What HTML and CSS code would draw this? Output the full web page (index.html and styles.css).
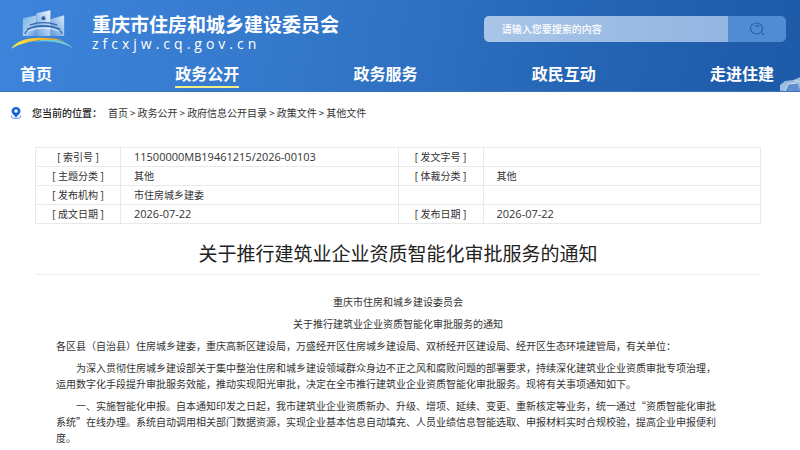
FILE: index.html
```html
<!DOCTYPE html>
<html lang="zh-CN">
<head>
<meta charset="utf-8">
<meta name="viewport" content="width=device-width, initial-scale=1">
<title>关于推行建筑业企业资质智能化审批服务的通知</title>
<link rel="stylesheet" href="styles.css">
</head>
<body>
<header class="site-header">
  <div class="masthead">
    <a class="brand" href="#">
      <svg class="brand-logo" viewBox="0 0 64 42" aria-hidden="true">
        <defs>
          <linearGradient id="tower" x1="0" y1="0" x2="1" y2="1">
            <stop offset="0" stop-color="#6fb6e0"/>
            <stop offset="0.55" stop-color="#a9cdf0"/>
            <stop offset="1" stop-color="#5c97de"/>
          </linearGradient>
          <linearGradient id="mid" x1="0" y1="1" x2="1" y2="0">
            <stop offset="0" stop-color="#6ba3e2"/>
            <stop offset="1" stop-color="#f0f7fd"/>
          </linearGradient>
          <linearGradient id="side" x1="0" y1="1" x2="1" y2="0">
            <stop offset="0" stop-color="#5f9ae0"/>
            <stop offset="1" stop-color="#d5e8f8"/>
          </linearGradient>
          <linearGradient id="gold" x1="0" y1="0" x2="1" y2="0">
            <stop offset="0" stop-color="#fff04a"/>
            <stop offset="0.6" stop-color="#f6b52b"/>
            <stop offset="1" stop-color="#f0a020"/>
          </linearGradient>
        </defs>
        <path d="M12 8 26 5V26H12Z" fill="url(#tower)"/>
        <path d="M40 9 54 5V26H40Z" fill="url(#side)"/>
        <path d="M26 3 40 0V26H26Z" fill="url(#mid)"/>
        <circle cx="33" cy="8" r="2" fill="#2a62aa"/>
        <g fill="none" stroke="#3568b1" stroke-width="1.2">
          <path d="M19 15Q33 10 47 15"/>
          <path d="M16 19Q33 12 50 19"/>
          <path d="M14 24Q17 16 33 16T52 24"/>
        </g>
        <path d="M17 21Q33 15 49 21" fill="none" stroke="#e4f0fb" stroke-width="1"/>
        <path d="M23 32Q51 25 63 39Q49 29 23 32Z" fill="#71cfd3"/>
        <path d="M0 39Q9 26 36 28Q46 28 54 31Q22 27 0 39Z" fill="url(#gold)"/>
      </svg>
      <span class="brand-text">
        <span class="brand-name">重庆市住房和城乡建设委员会</span>
        <span class="brand-domain">zfcxjw.cq.gov.cn</span>
      </span>
    </a>
    <form class="search" role="search">
      <input class="search-input" type="search" aria-label="搜索" placeholder="请输入您要搜索的内容">
      <button class="search-button" type="button" aria-label="搜索">
        <svg class="search-icon" viewBox="0 0 16 14" aria-hidden="true">
          <ellipse cx="7.5" cy="6.5" rx="6" ry="5.5"/>
          <path d="M6 4Q9 3 10 5M13 11 15 13"/>
        </svg>
      </button>
    </form>
  </div>
  <nav class="main-nav" aria-label="主导航">
    <a class="nav-link nav-home" href="#">首页</a>
    <a class="nav-link is-active" href="#">政务公开</a>
    <a class="nav-link" href="#">政务服务</a>
    <a class="nav-link" href="#">政民互动</a>
    <a class="nav-link" href="#">走进住建</a>
  </nav>
  <svg class="header-art" viewBox="0 0 20 14" aria-hidden="true">
    <path d="M0 14V8L5 4 14 3 20 0V14Z" fill="#9dbbe2"/>
    <path d="M5 14 8 7 17 6 20 13V14Z" fill="#5f8fcd"/>
    <path d="M5 14 8 7 17 6M14 3 20 5" fill="none" stroke="#d3e1f3"/>
  </svg>
</header>

<nav class="breadcrumb" aria-label="当前位置">
  <svg class="pin" viewBox="0 0 12 12" aria-hidden="true">
    <path d="M1.500 8.500Q0 11.300 6 11.300T10.500 8.500" fill="none" stroke="#4d8fe6"/>
    <path d="M6 10.500C4 8 1.500 6.500 1.500 4A4.500 4 0 0 1 10.500 4C10.500 6.500 8 8 6 10.500Z" fill="#1463d8"/>
    <circle cx="6" cy="4" r="1.700" fill="#fff"/>
  </svg>
  <span class="breadcrumb-label">您当前的位置：</span>
  <span class="trail"><a href="#">首页</a>&gt;<a href="#">政务公开</a>&gt;<a href="#">政府信息公开目录</a>&gt;<a href="#">政策文件</a>&gt;<a href="#">其他文件</a></span>
</nav>

<main class="document">
  <table class="meta">
    <colgroup><col class="col-label"><col><col class="col-label"><col></colgroup>
    <tbody>
      <tr><th scope="row">[ 索引号 ]</th><td class="code">11500000MB19461215/2026-00103</td><th scope="row">[ 发文字号 ]</th><td></td></tr>
      <tr><th scope="row">[ 主题分类 ]</th><td>其他</td><th scope="row">[ 体裁分类 ]</th><td>其他</td></tr>
      <tr><th scope="row">[ 发布机构 ]</th><td>市住房城乡建委</td><td></td><td></td></tr>
      <tr><th scope="row">[ 成文日期 ]</th><td class="code">2026-07-22</td><th scope="row">[ 发布日期 ]</th><td class="code">2026-07-22</td></tr>
    </tbody>
  </table>
  <h1 class="title">关于推行建筑业企业资质智能化审批服务的通知</h1>
  <article class="article">
    <p class="centered">重庆市住房和城乡建设委员会</p>
    <p class="centered">关于推行建筑业企业资质智能化审批服务的通知</p>
    <p>各区县（自治县）住房城乡建委，重庆高新区建设局，万盛经开区住房城乡建设局、双桥经开区建设局、经开区生态环境建管局，有关单位：</p>
    <p class="indented">为深入贯彻住房城乡建设部关于集中整治住房和城乡建设领域群众身边不正之风和腐败问题的部署要求，持续深化建筑业企业资质审批专项治理，运用数字化手段提升审批服务效能，推动实现阳光审批，决定在全市推行建筑业企业资质智能化审批服务。现将有关事项通知如下。</p>
    <p class="indented">一、实施智能化申报。自本通知印发之日起，我市建筑业企业资质新办、升级、增项、延续、变更、重新核定等业务，统一通过“资质智能化审批系统”在线办理。系统自动调用相关部门数据资源，实现企业基本信息自动填充、人员业绩信息智能选取、申报材料实时合规校验，提高企业申报便利度。</p>
  </article>
</main>
</body>
</html>
```
FILE: styles.css
```css
* {
  box-sizing: border-box;
}

body {
  margin: 0;
  background: #fff;
  color: #333;
  font: 10px/16px "Noto Sans CJK SC", sans-serif;
}

a {
  color: inherit;
  text-decoration: none;
}

.site-header {
  position: relative;
  height: 92px;
  overflow: hidden;
  color: #fff;
  background: linear-gradient(100deg, #3d84db 0%, #3478ca 38%, #2565b5 72%, #1d5aa8 100%);
  border-bottom: 1px solid #3b74b8;
}

.masthead {
  display: flex;
  justify-content: space-between;
  align-items: flex-start;
  height: 60px;
  padding: 10px 14px 0 11px;
}

.brand {
  display: flex;
  gap: 18px;
}

.brand-logo {
  width: 63px;
  height: 42px;
}

.brand-text {
  display: flex;
  flex-direction: column;
  padding-top: 2px;
}

.brand-name {
  font-size: 19px;
  font-weight: 700;
  line-height: 24px;
}

.brand-domain {
  font-family: "Open Sans", sans-serif;
  font-size: 14px;
  line-height: 16px;
  letter-spacing: 4px;
}

.search {
  display: flex;
  width: 39%;
  height: 26px;
  margin-top: 6px;
  overflow: hidden;
  border-radius: 5px;
}

.search-input {
  flex: 1;
  min-width: 0;
  padding: 0 18px;
  border: 0;
  outline: 0;
  background: linear-gradient(90deg, #a9c5e8, #93b5e1);
  color: #fff;
  font: inherit;
  font-weight: 500;
}

.search-input::placeholder {
  color: #fff;
  opacity: 1;
}

.search-button {
  display: flex;
  align-items: center;
  justify-content: center;
  width: 58px;
  padding: 0;
  border: 0;
  background: #518cd3;
}

.search-icon {
  width: 16px;
  height: 14px;
  fill: none;
  stroke: #225fae;
  stroke-width: 1.2;
}

.main-nav {
  display: flex;
  justify-content: space-between;
  padding: 0 26px 0 20px;
}

.nav-link {
  height: 28px;
  border-bottom: 2px solid transparent;
  font-size: 16px;
  font-weight: 700;
  line-height: 26px;
}

.nav-home {
  margin-right: 9px;
}

.nav-link.is-active {
  border-color: #f3ef86;
}

.header-art {
  position: absolute;
  right: 0;
  bottom: 0;
  width: 20px;
  height: 14px;
}

.breadcrumb {
  display: flex;
  align-items: center;
  height: 42px;
  padding-left: 10px;
}

.pin {
  width: 12px;
  height: 12px;
  margin-right: 10px;
}

.breadcrumb-label {
  margin-right: 6px;
  color: #222;
  font-weight: 500;
}

.trail a + a {
  margin-left: 2px;
}

.trail a:not(:last-child) {
  margin-right: 2px;
}

.document {
  padding: 13px 39px 0 35px;
}

.meta {
  width: 100%;
  table-layout: fixed;
  border-collapse: collapse;
}

.col-label {
  width: 85px;
}

.meta th,
.meta td {
  height: 19px;
  padding: 0 13px;
  border: 1px solid #e9e9e9;
  font-family: "Open Sans", "Noto Sans CJK SC", sans-serif;
  font-weight: 400;
  line-height: 16px;
  text-align: left;
}

.meta th {
  padding: 0;
  text-align: center;
}

.meta .code {
  font-size: 11px;
}

.title {
  margin: 0;
  padding: 15px 0 7px;
  border-bottom: 1px solid #eee;
  color: #222;
  font-size: 19px;
  font-weight: 400;
  line-height: 28px;
  text-align: center;
}

.article {
  padding: 19px 0 8px 21px;
}

.article p {
  max-width: 664px;
  margin: 0 0 6px;
}

.article .centered {
  max-width: none;
  margin-left: -21px;
  text-align: center;
}

.article .indented {
  text-indent: 2em;
}
```
